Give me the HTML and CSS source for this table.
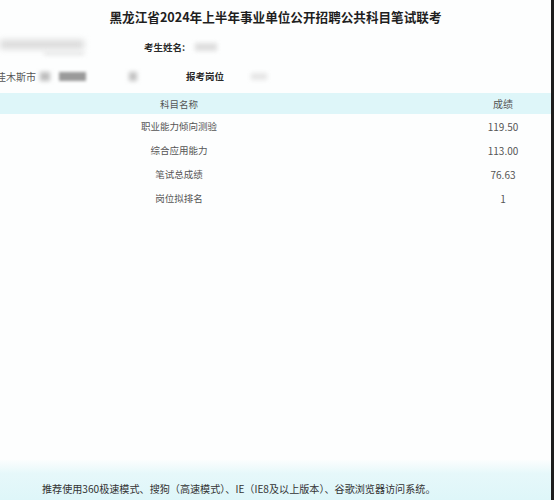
FILE: index.html
```html
<!DOCTYPE html>
<html lang="zh-CN">
<head>
<meta charset="utf-8">
<title>成绩查询</title>
<link rel="stylesheet" href="styles.css">
</head>
<body>
<div class="page">
  <main class="main">
    <h1 class="title">黑龙江省2024年上半年事业单位公开招聘公共科目笔试联考</h1>
    <div class="info info-1">
      <div class="blur-group">
        <span class="blur b1"></span>
        <span class="blur b2"></span>
      </div>
      <span class="label">考生姓名:</span>
      <span class="blur b3"></span>
    </div>
    <div class="info info-2">
      <span class="city">佳木斯市</span>
      <span class="blur b4"></span>
      <span class="blur b5"></span>
      <span class="blur b6"></span>
      <span class="label label-2">报考岗位</span>
      <span class="blur b7"></span>
    </div>
    <div class="table">
      <div class="row head">
        <span class="c1">科目名称</span><span></span><span class="c2">成绩</span>
      </div>
      <div class="row">
        <span class="c1">职业能力倾向测验</span><span></span><span class="c2">119.50</span>
      </div>
      <div class="row">
        <span class="c1">综合应用能力</span><span></span><span class="c2">113.00</span>
      </div>
      <div class="row">
        <span class="c1">笔试总成绩</span><span></span><span class="c2">76.63</span>
      </div>
      <div class="row">
        <span class="c1">岗位拟排名</span><span></span><span class="c2">1</span>
      </div>
    </div>
  </main>
  <footer class="footer">推荐使用360极速模式、搜狗（高速模式）、IE（IE8及以上版本）、谷歌浏览器访问系统。</footer>
</div>
</body>
</html>
```

FILE: styles.css
```css
* { box-sizing: border-box; }
html, body {
  margin: 0;
  padding: 0;
  background: #fff;
}
body {
  font-family: "Noto Sans CJK SC", "Noto Sans", sans-serif;
  color: #333;
  overflow: hidden;
}
.page {
  width: 554px;
  height: 500px;
  border-right: 3px solid #1e1e1e;
  display: flex;
  flex-direction: column;
  background: #fdfefe;
}
.main { flex: 1; }
.title {
  margin: 0;
  padding-top: 7px;
  height: 31px;
  font-size: 12.6px;
  line-height: 20px;
  font-weight: 700;
  text-align: center;
  color: #1f1f1f;
}
.info {
  display: flex;
  align-items: center;
  font-size: 9.5px;
}
.info-1 { height: 30px; padding-top: 2px; }
.info-2 { height: 30px; }
.blur {
  display: inline-block;
  background: #c9c9c9;
  filter: blur(2px);
}
.blur-group {
  width: 144px;
  height: 20px;
  position: relative;
}
.b1 { position: absolute; left: 0; top: 3px; width: 84px; height: 9px; background: #dadada; filter: blur(3px); }
.b2 { position: absolute; left: 44px; top: 15px; width: 40px; height: 3px; background: #e2e2e2; }
.label {
  font-weight: 700;
  color: #2a2a2a;
  font-size: 9.5px;
}
.b3 { width: 22px; height: 8px; margin-left: 10px; background: #dedede; }
.city {
  margin-left: -4px;
  color: #555;
  font-size: 10px;
}
.b4 { width: 10px; height: 9px; margin-left: 4px; background: #bdbdbd; }
.b5 { width: 27px; height: 9px; margin-left: 9px; background: #9a9a9a; filter: blur(1.5px); }
.b6 { width: 8px; height: 9px; margin-left: 43px; background: #c2c2c2; }
.label-2 { margin-left: 49px; }
.b7 { width: 16px; height: 7px; margin-left: 27px; background: #e6e6e6; }
.table { margin-top: 2px; }
.row {
  display: grid;
  grid-template-columns: 358px 1fr 96px;
  height: 24px;
  align-items: center;
  font-size: 9.5px;
  color: #555;
  text-align: center;
}
.row .c2 { font-size: 10px; }
.row.head {
  height: 21px;
  background: #def6f9;
  color: #555;
}
.footer {
  height: 48px;
  padding: 30px 0 0 42px;
  font-size: 10.1px;
  line-height: 14px;
  color: #333;
  background: linear-gradient(to bottom, #fdfefe 0%, #fdfefe 15%, #e6f8fa 45%, #def6f9 100%);
  white-space: nowrap;
}
```
